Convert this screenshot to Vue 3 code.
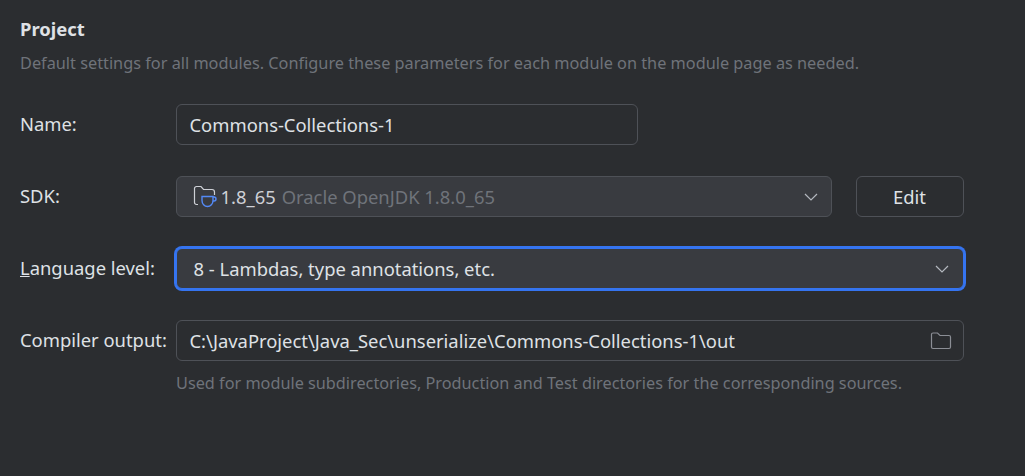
<script setup>
</script>

<template>
  <main class="page">
    <h1 class="title">Project</h1>
    <p class="hint top">Default settings for all modules. Configure these parameters for each module on the module page as needed.</p>
    <div class="form">
      <label class="lbl">Name:</label>
      <div class="row"><div class="field name">Commons-Collections-1</div></div>

      <label class="lbl">SDK:</label>
      <div class="row">
        <div class="field combo sdk">
          <svg class="jdk" width="24" height="26" viewBox="0 0 24 26" fill="none">
            <path d="M5 21.500 H3.500 A2 2 0 0 1 1.500 19.500 V5.500 A2 2 0 0 1 3.500 3.500 H8 L10.500 6.500 H19 A2.500 2.500 0 0 1 21.500 9 V12" stroke="#ced0d6" stroke-width="1.200"/>
            <path d="M9 13.500 H20 V17.500 A5.500 6 0 0 1 14.500 23.500 A5.500 6 0 0 1 9 17.500 Z M20 14 H21 A2 2 0 0 1 21 18 H20" stroke="#548af7" stroke-width="1.400"/>
          </svg>
          <span class="val">1.8_65</span><span class="muted">Oracle OpenJDK 1.8.0_65</span>
          <svg class="chev" width="16" height="16" viewBox="0 0 16 16" fill="none"><path d="M2 5 8 11 14 5" stroke="#b4b8bf" stroke-width="1.200"/></svg>
        </div>
        <button class="btn">Edit</button>
      </div>

      <label class="lbl"><u>L</u>anguage level:</label>
      <div class="row">
        <div class="field combo lang">
          <span>8 - Lambdas, type annotations, etc.</span>
          <svg class="chev" width="16" height="16" viewBox="0 0 16 16" fill="none"><path d="M2 5 8 11 14 5" stroke="#b4b8bf" stroke-width="1.200"/></svg>
        </div>
      </div>

      <label class="lbl">Compiler output:</label>
      <div class="row">
        <div class="field combo out">
          <span>C:\JavaProject\Java_Sec\unserialize\Commons-Collections-1\out</span>
          <svg class="chev folder" width="22" height="22" viewBox="0 0 22 22" fill="none"><path d="M1.500 4.500 A1.500 1.500 0 0 1 3 3 H7.500 L10 5.500 H19 A1.500 1.500 0 0 1 20.500 7 V17 A1.500 1.500 0 0 1 19 18.500 H3 A1.500 1.500 0 0 1 1.500 17 Z" stroke="#8b8e95" stroke-width="1.200"/></svg>
        </div>
      </div>

      <span></span>
      <p class="hint sub">Used for module subdirectories, Production and Test directories for the corresponding sources.</p>
    </div>
  </main>
</template>

<style scoped>
.page {
  box-sizing: border-box;
  width: 1025px;
  height: 476px;
  padding: 17px 0 0 20px;
  overflow: hidden;
  background: #2b2d30;
  color: #dfe1e5;
  font-family: "Noto Sans", sans-serif;
  font-size: 18.400px;
}
.title { margin: 0; font-size: 18.400px; line-height: 24px; font-weight: 700; color: #dfe1e5; }
.hint { margin: 0; color: #6f737a; font-size: 16.300px; line-height: 22px; }
.top { margin-top: 11px; }
.form {
  display: grid;
  grid-template-columns: 156px 788px;
  grid-template-rows: 41px 41px 41px 41px auto;
  row-gap: 31px;
  margin-top: 30px;
  align-items: center;
}
.lbl { line-height: 24px; white-space: nowrap; margin-top: -1px; }
.row { display: flex; align-items: center; gap: 24px; }
.field {
  box-sizing: border-box;
  height: 41px;
  display: flex;
  align-items: center;
  padding: 0 12.500px 1px;
  border: 1.500px solid #4e5157;
  border-radius: 6px;
  white-space: nowrap;
}
.name { width: 461.500px; }
.combo { position: relative; }
.sdk { width: 655.500px; background: #393b40; color: #b4b8bf; padding-left: 15.500px; }
.jdk { flex: none; margin-right: 4px; }
.val { margin-right: 6px; color: #ced0d6; }
.muted { color: #6f737a; }
.chev { position: absolute; right: 12px; top: 50%; transform: translateY(-50%); }
.lang { width: 788px; background: #393b40; border-color: #3574f0; box-shadow: 0 0 0 2px #3574f0; padding-left: 16.500px; }
.lang .chev { right: 13px; }
.out { width: 788px; }
.out .chev.folder { right: 11px; }
.btn {
  box-sizing: border-box;
  width: 108px;
  height: 41px;
  background: transparent;
  border: 1.500px solid #4e5157;
  border-radius: 6px;
  color: #dfe1e5;
  font: inherit;
}
.sub { margin-top: -20px; font-size: 16.250px; }
</style>
<style>
html, body { margin: 0; background: #2b2d30; }
</style>
